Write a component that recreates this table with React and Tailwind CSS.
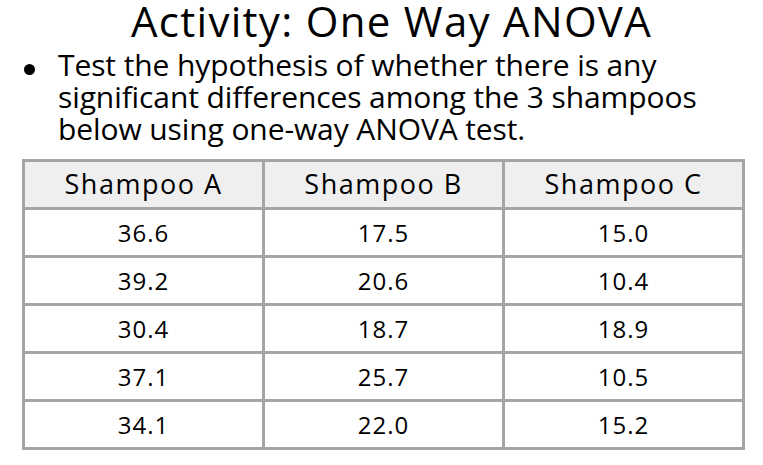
import React from 'react';

const headers = ['Shampoo A', 'Shampoo B', 'Shampoo C'];
const rows = [
  ['36.6', '17.5', '15.0'],
  ['39.2', '20.6', '10.4'],
  ['30.4', '18.7', '18.9'],
  ['37.1', '25.7', '10.5'],
  ['34.1', '22.0', '15.2'],
];

const App = () => {
  return (
    <div className="w-[763px] h-[465px] bg-white text-black overflow-hidden" style={{ fontFamily: '"Open Sans", "Noto Sans", sans-serif' }}>
      <h1 className="text-[42px] leading-[42px] text-center pl-[20px] tracking-[1.3px]">
        Activity: One Way ANOVA
      </h1>

      <div className="flex mt-[7px]">
        <div className="w-[11px] h-[11px] rounded-full bg-black ml-[24px] mt-[15px] shrink-0" />
        <p className="ml-[23px] text-[30px] leading-[32px] tracking-[-0.1px]">
          Test the hypothesis of whether there is any<br />
          significant differences among the 3 shampoos<br />
          below using one-way ANOVA test.
        </p>
      </div>

      {/* data table */}
      <div className="ml-[22px] mt-[14px] w-[723px] bg-[#a5a5a5] p-[3px] grid grid-cols-3 gap-[3px]">
        {headers.map((h) => (
          <div key={h} className="h-[45px] bg-[#efefef] flex items-center justify-center text-[27px] tracking-[1.5px]">
            {h}
          </div>
        ))}
        {rows.map((row, i) =>
          row.map((v, j) => (
            <div key={`${i}-${j}`} className="h-[45px] bg-white flex items-center justify-center text-[24px] tracking-[1px]">
              {v}
            </div>
          ))
        )}
      </div>
    </div>
  );
};

export default App;
